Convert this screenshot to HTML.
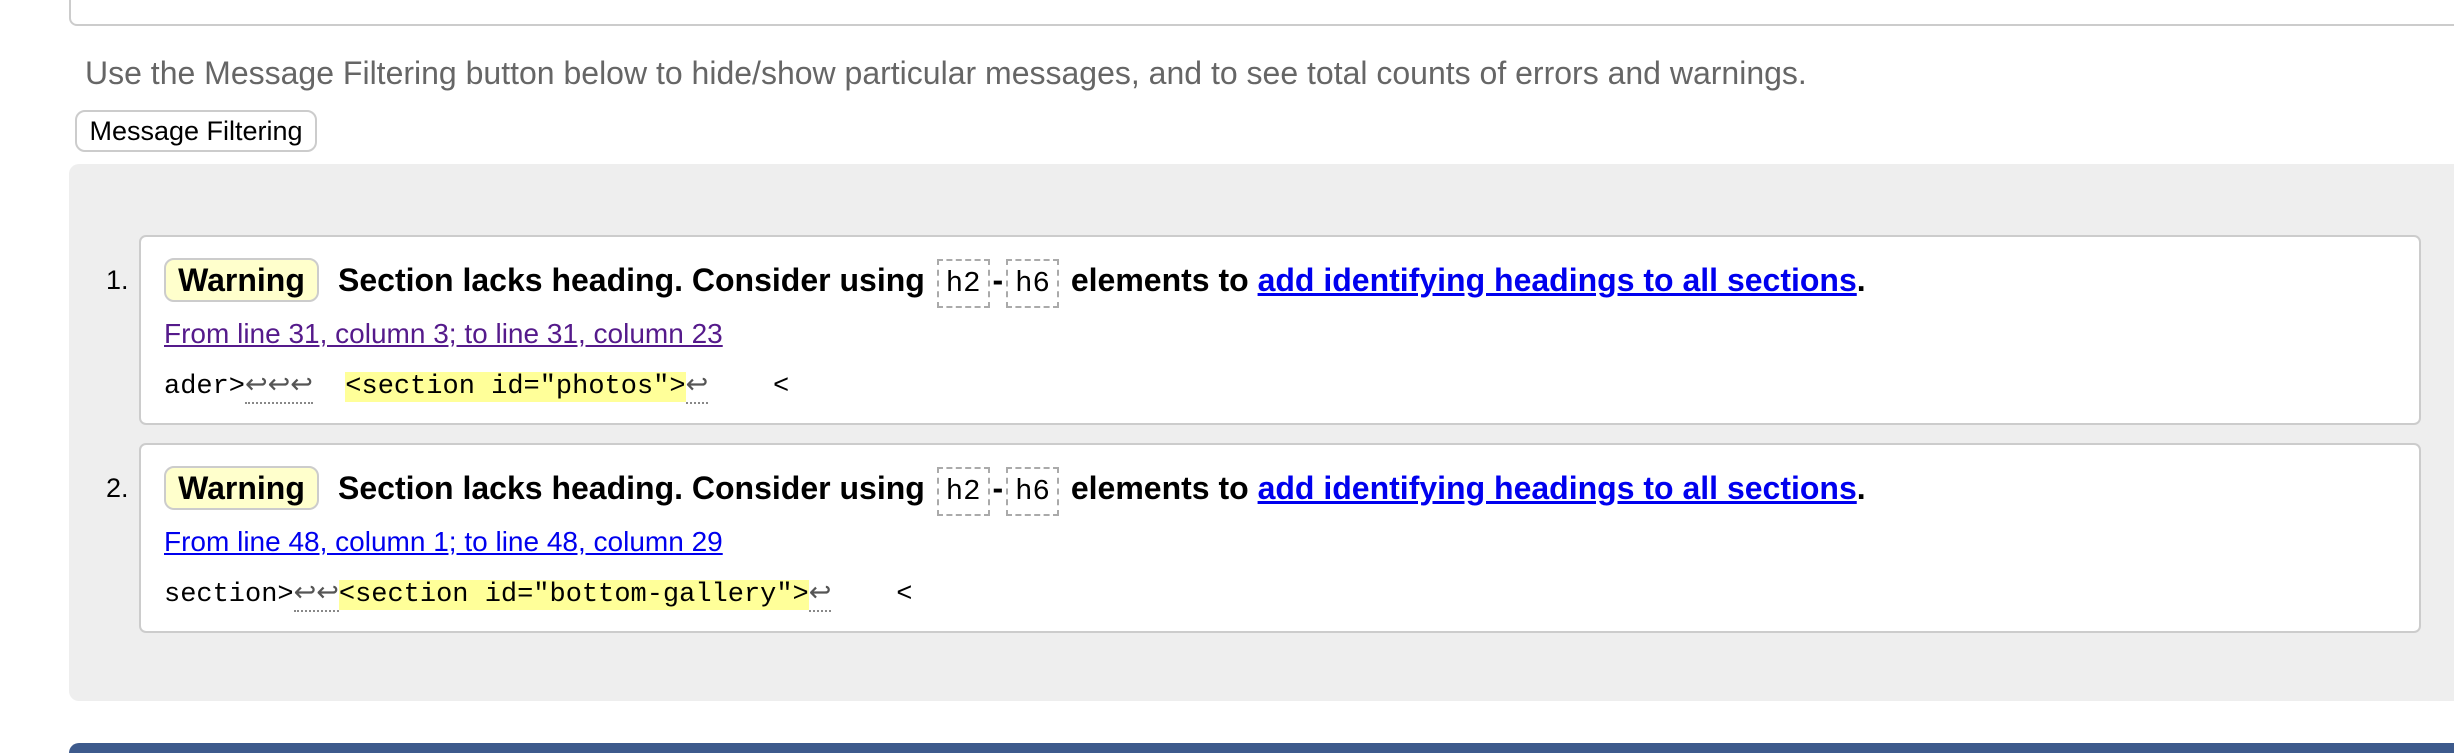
<!DOCTYPE html>
<html><head><meta charset="utf-8"><style>
html,body{margin:0;padding:0;background:#fff;width:2454px;height:753px;overflow:hidden;font-family:"Liberation Sans",Arial,sans-serif;position:relative}
.abs{position:absolute}
.topbox{left:69px;top:-20px;width:2420px;height:42px;border:2px solid #ccc;border-radius:8px;background:#fff}
.intro{left:85px;top:55px;font-size:32px;color:#666;white-space:nowrap}
.btn{left:75px;top:110px;width:238px;height:38px;border:2px solid #ccc;border-radius:10px;background:#fff;font-size:27px;line-height:38px;text-align:center;color:#000}
.gray{left:69px;top:164px;width:2420px;height:537px;background:#eee;border-radius:10px}
.card{left:139px;width:2278px;border:2px solid #ccc;border-radius:7px;background:#fff;height:186px}
.num{font-size:27px;color:#000;white-space:nowrap}
.badge{left:164px;width:151px;height:40px;background:#ffffcc;border:2px solid #ccc;border-radius:10px;font-weight:bold;font-size:32px;line-height:40px;text-align:center}
.msg{left:338px;font-weight:bold;font-size:32px;white-space:nowrap;color:#000}
.msg code{font-family:"Liberation Mono",monospace;font-weight:normal;font-size:29px;border:2px dashed #aaa;padding:6px 7px;margin:0 3px}
.msg a{color:#0000ee;text-decoration:underline}
.loc{left:164px;font-size:28px;white-space:nowrap;text-decoration:underline}
.code{left:164px;font-family:"Liberation Mono",monospace;font-size:27px;white-space:pre;color:#000}
.hl{background:#ffff99}
.lf{color:#555;border-bottom:2px dotted #888}
.bar{left:69px;top:743px;width:2420px;height:30px;background:#3d5a8c;border-radius:10px}
</style></head><body>
<div class="abs topbox"></div>
<div class="abs intro">Use the Message Filtering button below to hide/show particular messages, and to see total counts of errors and warnings.</div>
<div class="abs btn">Message Filtering</div>
<div class="abs gray"></div>

<div class="abs card" style="top:235px"></div>
<div class="abs num" style="left:106px;top:265px">1.</div>
<div class="abs badge" style="top:258px">Warning</div>
<div class="abs msg" style="top:262px">Section lacks heading. Consider using <code>h2</code>-<code>h6</code> elements to <a>add identifying headings to all sections</a>.</div>
<div class="abs loc" style="top:318px;color:#551a8b">From line 31, column 3; to line 31, column 23</div>
<div class="abs code" style="top:369px">ader&gt;<span class="lf">↩↩↩</span>  <span class="hl">&lt;section id="photos"&gt;</span><span class="lf">↩</span>    &lt;</div>

<div class="abs card" style="top:443px"></div>
<div class="abs num" style="left:106px;top:473px">2.</div>
<div class="abs badge" style="top:466px">Warning</div>
<div class="abs msg" style="top:470px">Section lacks heading. Consider using <code>h2</code>-<code>h6</code> elements to <a>add identifying headings to all sections</a>.</div>
<div class="abs loc" style="top:526px;color:#0000ee">From line 48, column 1; to line 48, column 29</div>
<div class="abs code" style="top:577px">section&gt;<span class="lf">↩↩</span><span class="hl">&lt;section id="bottom-gallery"&gt;</span><span class="lf">↩</span>    &lt;</div>

<div class="abs bar"></div>
</body></html>
